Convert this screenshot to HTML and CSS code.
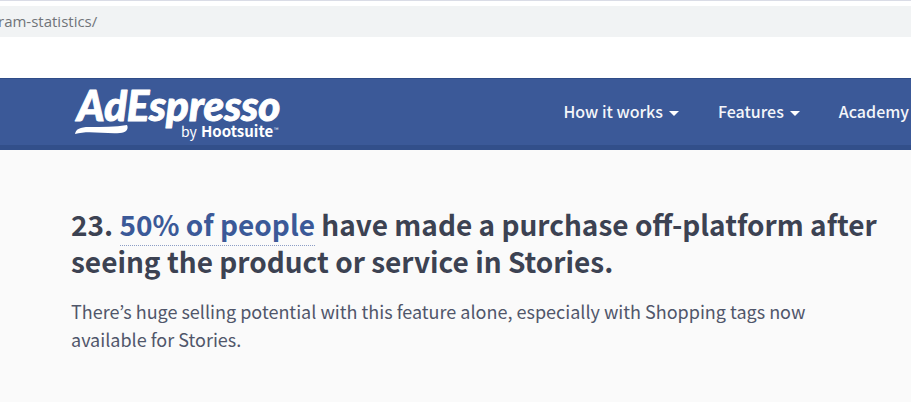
FILE: index.html
```
<!DOCTYPE html>
<html lang="en">
	<head>
		<meta charset="UTF-8">
		<meta name="viewport" content="width=device-width, initial-scale=1">
		<title>Instagram statistics</title>
		<link rel="stylesheet" href="styles.css">
	</head>
	<body>
		<div class="toolbar">
			<input class="address" type="text" aria-label="Address" value="ram-statistics/">
		</div>
		<header class="header">
			<a class="logo" href="#" aria-label="AdEspresso by Hootsuite">
				<svg width="212" height="56" viewBox="0 0 212 56" fill="#fff">
					<text class="logo-name" x="2" y="38">AdEspresso</text>
					<path d="M0 51C1 46 5 44 14 44C28 44 40 44 52 42C54 46 51 50 45 50C29 51 13 47 0 51Z"/>
					<text class="logo-by" x="106" y="54">by</text>
					<text class="logo-owner" x="126" y="54">Hootsuite</text>
					<text class="logo-mark" x="199" y="49">™</text>
				</svg>
			</a>
			<nav class="nav">
				<button type="button">How it works<span class="caret"></span></button>
				<button type="button">Features<span class="caret"></span></button>
				<a href="#">Academy</a>
			</nav>
		</header>
		<main class="content">
			<h2>23. <a href="#">50% of people</a> have made a purchase off-platform after seeing the product or service in Stories.</h2>
			<p>There’s huge selling potential with this feature alone, especially with Shopping tags now available for Stories.</p>
		</main>
	</body>
</html>
```
FILE: styles.css
```
body{
	margin: 0;
	background: #fafafa;
	color: #3c4252;
	font-family: "Noto Sans CJK KR", "Open Sans", sans-serif;
}
.toolbar{
	padding: 5px 0 41px;
	border-top: 1px solid #dadce6;
	background: #fff;
}
.address{
	display: block;
	box-sizing: border-box;
	width: 100%;
	height: 31px;
	padding: 0;
	border: 0;
	background: #f1f3f4;
	color: #707479;
	font: 15px/31px "Open Sans", sans-serif;
	text-indent: -2px;
}
.header{
	display: flex;
	align-items: center;
	justify-content: space-between;
	box-sizing: border-box;
	height: 72px;
	padding: 0 2px 2px 75px;
	border-top: 1px solid #2f4c88;
	border-bottom: 5px solid #324f8a;
	background: #3b5998;
}
.logo svg{
	display: block;
	overflow: visible;
}
.logo-name{
	font: italic 900 42px Lato, sans-serif;
	stroke: #fff;
	stroke-width: 1px;
	stroke-linejoin: round;
}
.logo-by{
	font: 14px "Noto Sans CJK KR", sans-serif;
}
.logo-owner{
	font: bold 15px "Noto Sans CJK KR", sans-serif;
}
.logo-mark{
	font: 6px "Noto Sans CJK KR", sans-serif;
}
.nav{
	display: flex;
	align-items: center;
	gap: 39px;
}
.nav a,
.nav button{
	display: flex;
	align-items: center;
	gap: 6px;
	padding: 0;
	border: 0;
	background: none;
	color: #f4f6fa;
	font: 500 16px/24px "Noto Sans CJK KR", sans-serif;
	text-decoration: none;
	white-space: nowrap;
	cursor: pointer;
}
.caret{
	margin-top: 4px;
	border: 5px solid transparent;
	border-top-color: #fff;
	border-bottom: 0;
}
.content{
	padding: 56px 24px 48px 71px;
}
.content h2{
	margin: 0;
	font-size: 28px;
	font-weight: bold;
	line-height: 37px;
}
.content h2 a{
	padding-bottom: 1px;
	border-bottom: 1px dotted #8c9dc5;
	color: #3b5998;
	text-decoration: none;
}
.content p{
	max-width: 760px;
	margin: 17px 0 0;
	color: #50566a;
	font-size: 18px;
	line-height: 28px;
}
```
